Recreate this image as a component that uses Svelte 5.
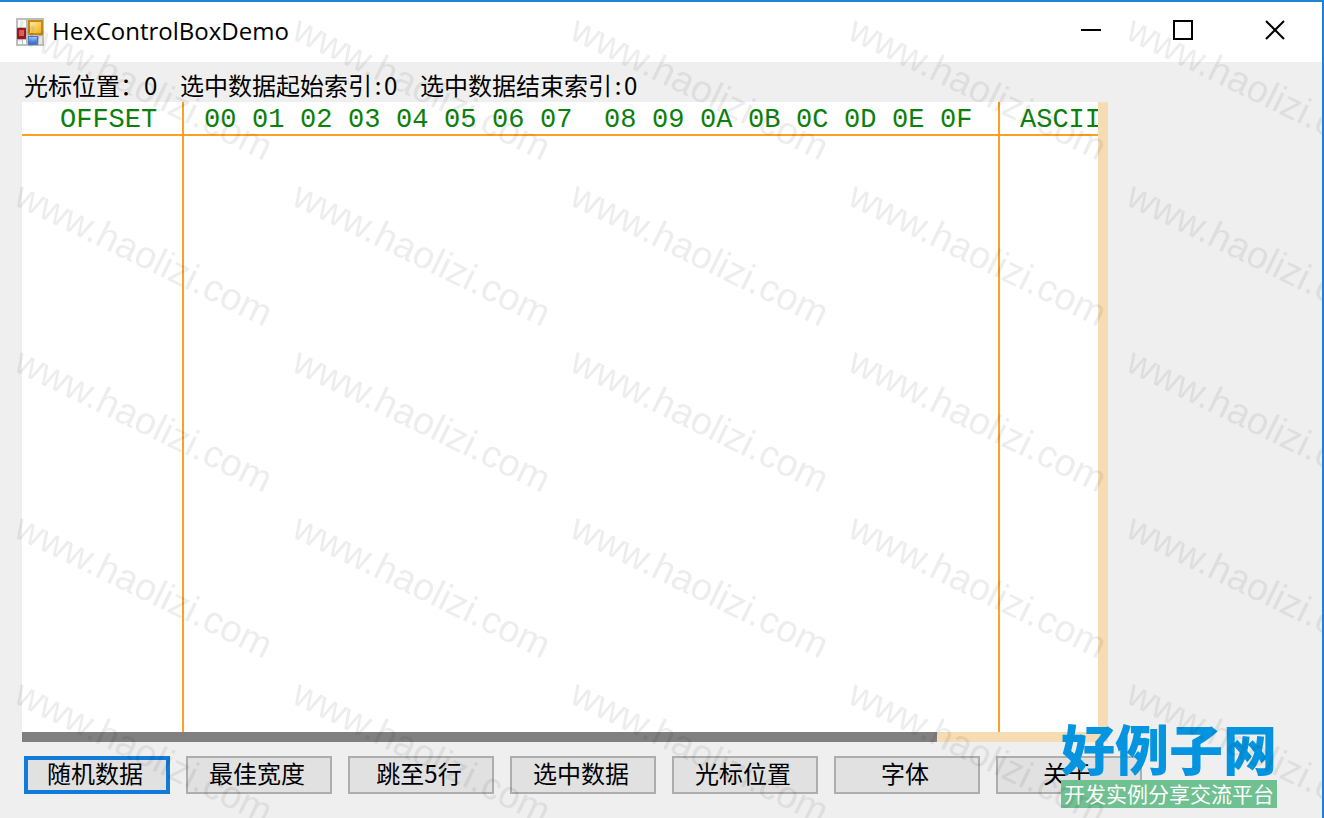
<script lang="ts">
	const bytes = Array.from({ length: 16 }, (_, i) => i.toString(16).toUpperCase().padStart(2, '0'));
	const actions = ['随机数据', '最佳宽度', '跳至5行', '选中数据', '光标位置', '字体', '关于'];

	let cursor = $state(0);
	let selStart = $state(0);
	let selEnd = $state(0);
	let active = $state(0);
	let thumb = 85;
</script>

<div class="window">
	<header class="titlebar">
		<svg class="app-icon" viewBox="0 0 28 28" aria-hidden="true">
			<defs>
				<linearGradient id="gold" x1="0" y1="0" x2="1" y2="1">
					<stop offset="0" stop-color="#ffe9a0" />
					<stop offset="1" stop-color="#f2b01c" />
				</linearGradient>
				<linearGradient id="blue" x1="0" y1="0" x2="0" y2="1">
					<stop offset="0" stop-color="#9cc6ff" />
					<stop offset="1" stop-color="#3f78dc" />
				</linearGradient>
			</defs>
			<rect width="28" height="28" fill="#bdbdbd" />
			<rect x="2" y="2" width="8" height="7" fill="#fafafa" />
			<rect x="2" y="22" width="4" height="4" fill="#fafafa" />
			<rect x="7" y="22" width="3" height="4" fill="#fafafa" />
			<rect x="23" y="18" width="3" height="8" fill="#e6e6e6" />
			<rect x="1" y="10" width="9" height="11" fill="#a3181c" />
			<rect x="3" y="12" width="5" height="6" fill="#d8645f" />
			<rect x="12" y="2" width="15" height="15" fill="#c28a16" />
			<rect x="14" y="4" width="11" height="11" fill="url(#gold)" />
			<rect x="12" y="18" width="10" height="9" fill="#4a78cc" />
			<rect x="13" y="19" width="8" height="6" fill="url(#blue)" />
		</svg>
		<h1>HexControlBoxDemo</h1>
		<div class="controls">
			<button type="button" aria-label="最小化">
				<svg viewBox="0 0 20 20"><path d="M0 10H20" /></svg>
			</button>
			<button type="button" aria-label="最大化">
				<svg viewBox="0 0 20 20"><path d="M1 1H19V19H1Z" /></svg>
			</button>
			<button type="button" aria-label="关闭">
				<svg viewBox="0 0 20 20"><path d="M1 1L19 19M19 1L1 19" /></svg>
			</button>
		</div>
	</header>

	<main>
		<div class="status">
			<span>光标位置：{cursor}</span>
			<span>选中数据起始索引<span class="colon">:</span>{selStart}</span>
			<span>选中数据结束索引<span class="colon">:</span>{selEnd}</span>
		</div>

		<div class="hexbox">
			<div class="view">
				<table>
					<thead>
						<tr>
							<th class="offset">OFFSET</th>
							{#each bytes as b, i}
								<th class:first={i === 0} class:half={i === 8} class:last={i === 15}>{b}</th>
							{/each}
							<th class="ascii">ASCII</th>
						</tr>
					</thead>
					<tbody>
						<tr>
							<td class="offset"></td>
							{#each bytes as b, i}
								<td class:last={i === 15}></td>
							{/each}
							<td></td>
						</tr>
					</tbody>
				</table>
			</div>
			<div class="vscroll"></div>
			<div class="hscroll"><div class="thumb" style="width: {thumb}%"></div></div>
		</div>

		<div class="actions">
			{#each actions as label, i}
				<button type="button" class:active={active === i} onclick={() => (active = i)}>{label}</button>
			{/each}
		</div>
	</main>

	<div class="brand">
		<strong>好例子网</strong>
		<span>开发实例分享交流平台</span>
	</div>

	<svg class="watermark" aria-hidden="true">
		<defs>
			<pattern id="wm" x="8" y="9" width="278" height="166" patternUnits="userSpaceOnUse">
				<text transform="translate(4 29) rotate(26)">www.haolizi.com</text>
			</pattern>
		</defs>
		<rect width="100%" height="100%" fill="url(#wm)" />
	</svg>
</div>

<style>
	:global(body) {
		margin: 0;
	}

	.window {
		position: relative;
		box-sizing: border-box;
		min-height: 100vh;
		display: flex;
		flex-direction: column;
		overflow: hidden;
		background: #efefef;
		border-top: 2px solid #1f82d2;
		border-right: 2px solid #1f82d2;
		color: #000;
		font-family: 'Noto Sans CJK SC', sans-serif;
	}

	.titlebar {
		display: flex;
		align-items: center;
		height: 60px;
		padding-left: 16px;
		background: #fff;
	}

	.app-icon {
		width: 28px;
		height: 28px;
	}

	h1 {
		flex: 1;
		margin: 0 0 2px 8px;
		font: 400 24px/32px 'Open Sans', sans-serif;
	}

	.controls {
		display: flex;
		align-self: stretch;
		padding-right: 1px;
	}

	.controls button {
		display: grid;
		place-items: center;
		width: 92px;
		padding: 0 0 4px;
		border: 0;
		background: none;
	}

	.controls svg {
		width: 20px;
		height: 20px;
		fill: none;
		stroke: #000;
		stroke-width: 2;
	}

	main {
		flex: 1;
		display: flex;
		flex-direction: column;
		padding: 0 180px 24px 22px;
	}

	.status {
		display: grid;
		grid-template-columns: 156px 240px auto;
		justify-content: start;
		height: 40px;
		padding-left: 2px;
		font-size: 24px;
		line-height: 46px;
		white-space: nowrap;
	}

	.colon {
		display: inline-block;
		width: 12px;
		text-align: center;
	}

	.hexbox {
		flex: 1;
		display: grid;
		grid-template: 1fr 10px / minmax(0, 1fr) 10px;
		margin-right: 34px;
	}

	.view {
		display: flex;
		overflow: hidden;
		background: #fff;
	}

	table {
		flex: 1;
		width: 100%;
		table-layout: fixed;
		border-spacing: 0;
	}

	th,
	td {
		box-sizing: border-box;
		width: 48px;
		padding: 0;
	}

	th {
		height: 34px;
		padding-top: 4px;
		border-bottom: 2px solid #ffa022;
		color: #0c800c;
		font: 400 27px/28px 'Liberation Mono', monospace;
		text-align: left;
	}

	.offset {
		width: 162px;
		border-right: 2px solid #ffa022;
	}

	th.offset {
		padding-left: 38px;
	}

	.first {
		width: 68px;
		padding-left: 20px;
	}

	.half {
		width: 64px;
		padding-left: 16px;
	}

	.last {
		width: 60px;
		border-right: 2px solid #ffa022;
	}

	.ascii {
		width: auto;
		padding-left: 20px;
	}

	.vscroll {
		grid-row: span 2;
		background: #f5dcb3;
	}

	.hscroll {
		background: #f5dcb3;
	}

	.thumb {
		height: 100%;
		background: #808080;
	}

	.actions {
		display: flex;
		gap: 16px;
		padding: 14px 0 0 2px;
	}

	.actions button {
		flex: 0 1 146px;
		height: 38px;
		padding: 0 4px 4px 0;
		border: 2px solid #adadad;
		background: #e1e1e1;
		color: #000;
		font: 24px/30px 'Noto Sans CJK SC', sans-serif;
		white-space: nowrap;
	}

	.actions .active {
		border: 4px solid #127ad7;
		line-height: 26px;
	}

	.brand {
		position: absolute;
		right: 45px;
		bottom: 10px;
		display: flex;
		flex-direction: column;
		width: 216px;
	}

	.brand strong {
		padding-bottom: 4px;
		color: #0594e0;
		font-size: 54px;
		font-weight: 900;
		line-height: 56px;
	}

	.brand span {
		padding-bottom: 2px;
		background: #6fc191;
		color: #fff;
		font-size: 21px;
		line-height: 26px;
		text-align: center;
	}

	.watermark {
		position: absolute;
		top: -2px;
		left: 0;
		width: 100%;
		height: calc(100% + 2px);
		pointer-events: none;
	}

	.watermark text {
		fill: #000;
		fill-opacity: 0.07;
		font: 38px 'Liberation Sans', sans-serif;
	}
</style>
